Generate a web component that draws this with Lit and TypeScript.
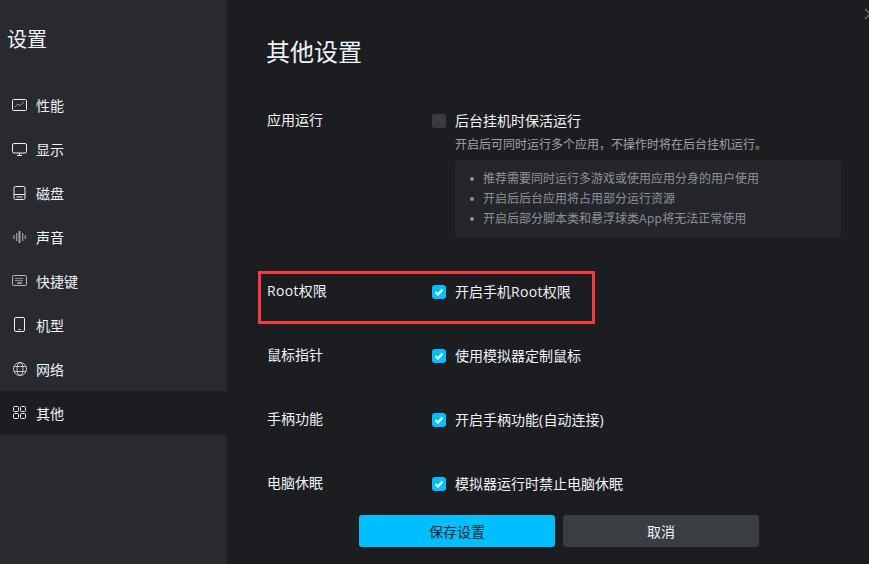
import { LitElement, html, css, svg } from 'lit';
import { customElement } from 'lit/decorators.js';

const navIcons = {
  perf: svg`<rect x=".5" y="2.5" width="14" height="11" rx="1.2"/><path d="M3 10l3-3 2 1.5L12 5" stroke-opacity=".55"/>`,
  display: svg`<rect x=".5" y="2.5" width="14" height="9.5" rx="1.5"/><path d="M7.5 12v2M5 14.5h5"/>`,
  disk: svg`<rect x="2" y="1.5" width="11" height="13" rx="1.5"/><path d="M2 9.5h11M4.5 12h6"/>`,
  sound: svg`<g stroke-opacity=".6" stroke-width="1.2"><path d="M2 6v4M4.7 4v8M10.7 4v8M13.3 6v4"/><path d="M7.5 2v12" stroke-width="2"/></g>`,
  keys: svg`<rect x=".5" y="2.5" width="14" height="10" rx="1.2" stroke-opacity=".7"/><path d="M3.5 5.5h8M3.5 7.5h8" stroke-dasharray="1 1"/><path d="M5 10h5"/>`,
  phone: svg`<rect x="2.5" y=".5" width="10" height="14" rx="1.5"/><path d="M6.5 12.5h2"/>`,
  net: svg`<g stroke-opacity=".75"><circle cx="8" cy="8" r="6.5"/><ellipse cx="8" cy="8" rx="3" ry="6.5"/><path d="M2 5.5h12M2 10.5h12"/></g>`,
  other: svg`<rect x="1.5" y="1.5" width="5" height="5" rx="1"/><rect x="8.5" y="1.5" width="5" height="5" rx="1"/><rect x="1.5" y="8.5" width="5" height="5" rx="1"/><rect x="8.5" y="8.5" width="5" height="5" rx="1"/>`,
};

const navItems = [
  { label: '性能', icon: navIcons.perf },
  { label: '显示', icon: navIcons.display },
  { label: '磁盘', icon: navIcons.disk },
  { label: '声音', icon: navIcons.sound },
  { label: '快捷键', icon: navIcons.keys },
  { label: '机型', icon: navIcons.phone },
  { label: '网络', icon: navIcons.net },
  { label: '其他', icon: navIcons.other, active: true },
];

const options = [
  { label: html`鼠标指针`, text: html`使用模拟器定制鼠标` },
  { label: html`手柄功能`, text: html`开启手柄功能<span class="lat">(</span>自动连接<span class="lat">)</span>` },
  { label: html`电脑休眠`, text: html`模拟器运行时禁止电脑休眠` },
];

@customElement('app-root')
export class AppRoot extends LitElement {
  static styles = css`
    :host {
      display: flex;
      position: relative;
      width: 869px;
      height: 564px;
      overflow: hidden;
      background: #1c1d21;
      color: #f0f2f5;
      font-family: 'Open Sans', 'Noto Sans CJK SC', sans-serif;
      font-size: 14px;
    }

    .lat {
      letter-spacing: 0.3px;
    }

    .side {
      width: 227px;
      flex: none;
      background: #292a30;
    }

    .side h1 {
      margin: 0;
      padding: 25px 0 0 7px;
      height: 83px;
      box-sizing: border-box;
      font-size: 20px;
      line-height: 30px;
      font-weight: 400;
    }

    .nav-item {
      display: flex;
      align-items: center;
      gap: 8px;
      height: 44px;
      padding-left: 12px;
    }

    .nav-item svg {
      width: 16px;
      height: 16px;
      flex: none;
      fill: none;
      stroke: #eef0f2;
      stroke-width: 1;
    }

    .nav-item.active {
      background: #1c1d21;
    }

    .main {
      flex: 1;
      display: flex;
      flex-direction: column;
      padding-left: 40px;
      min-width: 0;
    }

    .main h2 {
      margin: 0 0 0 -1px;
      padding-top: 34px;
      height: 104px;
      box-sizing: border-box;
      font-size: 24px;
      line-height: 36px;
      font-weight: 400;
    }

    .row {
      display: grid;
      grid-template-columns: 165px 1fr;
      height: 64px;
      line-height: 24px;
    }

    .row.first {
      height: 171px;
    }

    .check {
      display: flex;
      align-items: center;
      gap: 9px;
      height: 24px;
      padding-top: 5px;
    }

    .label {
      position: relative;
      top: 4px;
    }

    .box {
      width: 14px;
      height: 14px;
      flex: none;
      border-radius: 3px;
      background: #00bfff;
      display: flex;
      align-items: center;
      justify-content: center;
    }

    .box.off {
      background: #3a3b40;
    }

    .box svg {
      width: 10px;
      height: 10px;
      fill: none;
      stroke: #fff;
      stroke-width: 2;
    }

    .hint {
      margin: 2px 0 0 23px;
      color: #a0a4aa;
      font-size: 12px;
      line-height: 20px;
      height: 20px;
    }

    .notes {
      margin: 5px 0 0 23px;
      width: 386px;
      height: 78px;
      box-sizing: border-box;
      padding: 9px 0 0 28px;
      border-radius: 3px;
      background: #25262b;
      list-style: none;
      color: #8e939a;
      font-size: 12px;
      line-height: 20px;
    }

    .notes li {
      position: relative;
    }

    .notes li::before {
      content: '';
      position: absolute;
      left: -13px;
      top: 8px;
      width: 4px;
      height: 4px;
      border-radius: 50%;
      background: #8e939a;
    }

    .footer {
      position: absolute;
      left: 359px;
      top: 515px;
      display: flex;
      gap: 8px;
    }

    .btn {
      width: 196px;
      height: 32px;
      border: none;
      border-radius: 3px;
      padding: 0;
      font: inherit;
      background: #3a3e42;
      color: #f0f2f5;
    }

    .btn.primary {
      background: #00bfff;
      color: #10242c;
    }

    .mark {
      position: absolute;
      left: 258px;
      top: 271px;
      width: 337px;
      height: 53px;
      box-sizing: border-box;
      border: 3px solid #f53b3f;
      pointer-events: none;
    }

    .close {
      position: absolute;
      right: -7px;
      top: 8px;
      width: 12px;
      height: 12px;
      fill: none;
      stroke: #6a6c70;
      stroke-width: 1.5;
    }
  `;

  private renderCheck(text: unknown, off = false) {
    return html`<div class="check">
      <span class="box ${off ? 'off' : ''}">
        ${off ? '' : html`<svg viewBox="0 0 10 10"><path d="M1.5 5l2.5 2.5 4.5-5"/></svg>`}
      </span>
      <span>${text}</span>
    </div>`;
  }

  render() {
    return html`
      <aside class="side">
        <h1>设置</h1>
        ${navItems.map(
          (item) => html`<div class="nav-item ${item.active ? 'active' : ''}">
            <svg viewBox="0 0 16 16">${item.icon}</svg>
            <span>${item.label}</span>
          </div>`
        )}
      </aside>
      <main class="main">
        <h2>其他设置</h2>
        <div class="row first">
          <span class="label">应用运行</span>
          <div>
            ${this.renderCheck('后台挂机时保活运行', true)}
            <div class="hint">开启后可同时运行多个应用，不操作时将在后台挂机运行。</div>
            <ul class="notes">
              <li>推荐需要同时运行多游戏或使用应用分身的用户使用</li>
              <li>开启后后台应用将占用部分运行资源</li>
              <li>开启后部分脚本类和悬浮球类<span class="lat">App</span>将无法正常使用</li>
            </ul>
          </div>
        </div>
        <div class="row">
          <span class="label"><span class="lat">Root</span>权限</span>
          ${this.renderCheck(html`开启手机<span class="lat">Root</span>权限`)}
        </div>
        ${options.map(
          (o) => html`<div class="row">
            <span class="label">${o.label}</span>
            ${this.renderCheck(o.text)}
          </div>`
        )}
      </main>
      <div class="footer">
        <button class="btn primary">保存设置</button>
        <button class="btn">取消</button>
      </div>
      <div class="mark"></div>
      <svg class="close" viewBox="0 0 12 12"><path d="M1 1l10 10M1 11L11 1"/></svg>
    `;
  }
}
